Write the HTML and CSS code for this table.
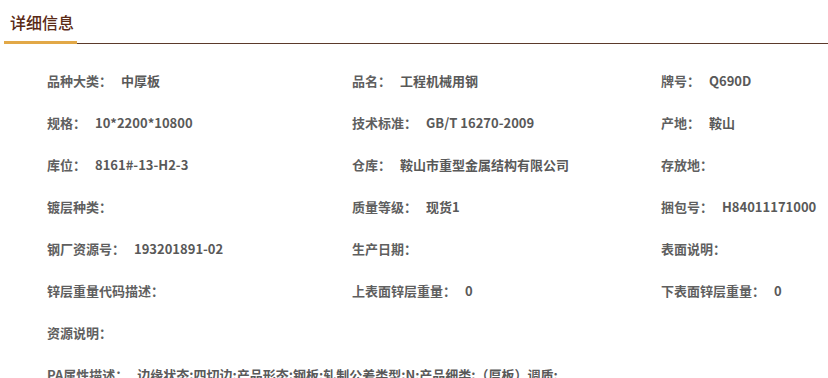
FILE: index.html
```html
<!DOCTYPE html>
<html lang="zh-CN">
<head>
<meta charset="utf-8">
<title>详细信息</title>
<link rel="stylesheet" href="styles.css">
</head>
<body>
<div class="panel">
  <div class="panel-head">
    <h2 class="panel-title">详细信息</h2>
  </div>
  <div class="info-grid">
    <div class="item"><span class="lbl">品种大类：</span><span class="val">中厚板</span></div>
    <div class="item"><span class="lbl">品名：</span><span class="val">工程机械用钢</span></div>
    <div class="item"><span class="lbl">牌号：</span><span class="val">Q690D</span></div>

    <div class="item"><span class="lbl">规格：</span><span class="val">10*2200*10800</span></div>
    <div class="item"><span class="lbl">技术标准：</span><span class="val">GB/T 16270-2009</span></div>
    <div class="item"><span class="lbl">产地：</span><span class="val">鞍山</span></div>

    <div class="item"><span class="lbl">库位：</span><span class="val">8161#-13-H2-3</span></div>
    <div class="item"><span class="lbl">仓库：</span><span class="val">鞍山市重型金属结构有限公司</span></div>
    <div class="item"><span class="lbl">存放地：</span><span class="val"></span></div>

    <div class="item"><span class="lbl">镀层种类：</span><span class="val"></span></div>
    <div class="item"><span class="lbl">质量等级：</span><span class="val">现货1</span></div>
    <div class="item"><span class="lbl">捆包号：</span><span class="val">H84011171000</span></div>

    <div class="item"><span class="lbl">钢厂资源号：</span><span class="val">193201891-02</span></div>
    <div class="item"><span class="lbl">生产日期：</span><span class="val"></span></div>
    <div class="item"><span class="lbl">表面说明：</span><span class="val"></span></div>

    <div class="item"><span class="lbl">锌层重量代码描述：</span><span class="val"></span></div>
    <div class="item"><span class="lbl">上表面锌层重量：</span><span class="val">0</span></div>
    <div class="item"><span class="lbl">下表面锌层重量：</span><span class="val">0</span></div>

    <div class="item wide"><span class="lbl">资源说明：</span><span class="val"></span></div>
    <div class="item wide"><span class="lbl">PA属性描述：</span><span class="val">边缘状态:四切边;产品形态:钢板;轧制公差类型:N;产品细类:（厚板）调质;</span></div>
  </div>
</div>
</body>
</html>
```

FILE: styles.css
```css
html, body {
  margin: 0;
  padding: 0;
  background: #ffffff;
  overflow: hidden;
}

body {
  font-family: "Noto Sans CJK SC", "Noto Sans", "Liberation Sans", sans-serif;
  color: #5f5f5f;
}

.panel {
  margin-left: 4px;
}

.panel-head {
  display: flex;
  align-items: flex-end;
  height: 43px;
  border-bottom: 1px solid #5b3a2b;
}

.panel-title {
  margin: 0 0 -1px 0;
  padding: 9px 3px 6px 6px;
  height: 26px;
  line-height: 26px;
  font-size: 16px;
  font-weight: 500;
  color: #5a2a16;
  border-bottom: 3px solid #e2a847;
  white-space: nowrap;
}

.info-grid {
  display: grid;
  grid-template-columns: 305px 309px 400px;
  grid-auto-rows: 42px;
  padding: 15px 0 0 43px;
  font-size: 13px;
  font-weight: 700;
}

.item {
  display: flex;
  align-items: center;
  white-space: nowrap;
}

.item.wide {
  grid-column: 1 / -1;
}

.lbl {
  color: #5f5f5f;
}

.val {
  margin-left: 9px;
  color: #595959;
}
```
